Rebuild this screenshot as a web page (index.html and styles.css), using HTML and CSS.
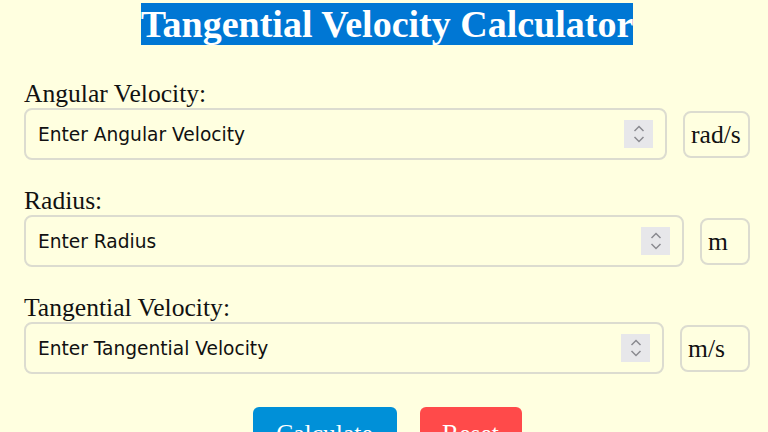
FILE: index.html
```html
<!DOCTYPE html>
<html>
<head>
  <meta charset="utf-8">
  <title>Tangential Velocity Calculator</title>
  <link rel="stylesheet" href="styles.css">
</head>
<body>
  <div class="calculator">
    <h1><span class="title">Tangential Velocity Calculator</span></h1>

    <div class="field">
      <label for="angular">Angular Velocity:</label>
      <div class="field-row">
        <div class="input-wrap">
          <input type="number" id="angular" placeholder="Enter Angular Velocity">
          <span class="spinner">
            <svg width="12" height="20" viewBox="0 0 12 20"><path d="M1.5 7 L6 2.5 L10.5 7 M1.5 13 L6 17.5 L10.5 13" fill="none" stroke="#8a8a90" stroke-width="1.5"/></svg>
          </span>
        </div>
        <select class="unit unit-angular">
          <option>rad/s</option>
        </select>
      </div>
    </div>

    <div class="field">
      <label for="radius">Radius:</label>
      <div class="field-row">
        <div class="input-wrap">
          <input type="number" id="radius" placeholder="Enter Radius">
          <span class="spinner">
            <svg width="12" height="20" viewBox="0 0 12 20"><path d="M1.5 7 L6 2.5 L10.5 7 M1.5 13 L6 17.5 L10.5 13" fill="none" stroke="#8a8a90" stroke-width="1.5"/></svg>
          </span>
        </div>
        <select class="unit unit-radius">
          <option>m</option>
        </select>
      </div>
    </div>

    <div class="field">
      <label for="tangential">Tangential Velocity:</label>
      <div class="field-row">
        <div class="input-wrap">
          <input type="number" id="tangential" placeholder="Enter Tangential Velocity">
          <span class="spinner">
            <svg width="12" height="20" viewBox="0 0 12 20"><path d="M1.5 7 L6 2.5 L10.5 7 M1.5 13 L6 17.5 L10.5 13" fill="none" stroke="#8a8a90" stroke-width="1.5"/></svg>
          </span>
        </div>
        <select class="unit unit-speed">
          <option>m/s</option>
        </select>
      </div>
    </div>

    <div class="buttons">
      <button class="button calc">Calculate</button>
      <button class="button reset">Reset</button>
    </div>
  </div>
</body>
</html>
```

FILE: styles.css
```css
body {
  margin: 0;
  background-color: #ffffe0;
  font-family: "Liberation Serif", "Times New Roman", serif;
  color: #111;
}

.calculator {
  padding: 2px 18px 0 24px;
}

h1 {
  margin: 0 0 34px 0;
  text-align: center;
  font-size: 38px;
  line-height: 44px;
}

.title {
  background-color: #0077d4;
  color: white;
}

.field {
  margin-bottom: 27px;
}

.field label {
  display: block;
  font-size: 25.6px;
  line-height: 28px;
}

.field-row {
  display: flex;
  align-items: center;
  gap: 16px;
}

.input-wrap {
  position: relative;
  flex: 1;
  display: flex;
}

input[type="number"] {
  flex: 1;
  width: 100%;
  height: 52px;
  box-sizing: border-box;
  padding: 0 50px 0 12px;
  border: 2px solid #dcdcd0;
  border-radius: 8px;
  background-color: #ffffe0;
  font-family: "DejaVu Sans", Tahoma, sans-serif;
  font-size: 18.6px;
  color: #111;
  appearance: textfield;
  -moz-appearance: textfield;
}

input[type="number"]::-webkit-inner-spin-button,
input[type="number"]::-webkit-outer-spin-button {
  -webkit-appearance: none;
  margin: 0;
}

input::placeholder {
  color: #111;
}

.spinner {
  position: absolute;
  right: 14px;
  top: 12px;
  width: 29px;
  height: 28px;
  background-color: #e7e7ea;
  display: flex;
  align-items: center;
  justify-content: center;
}

.unit {
  appearance: none;
  -webkit-appearance: none;
  height: 47px;
  box-sizing: border-box;
  padding: 0 6px;
  border: 2px solid #dcdcd0;
  border-radius: 8px;
  background-color: #ffffe0;
  font-family: "Liberation Serif", "Times New Roman", serif;
  font-size: 25.6px;
  color: #111;
}

.unit-angular {
  width: 67px;
}

.unit-radius {
  width: 50px;
}

.unit-speed {
  width: 70px;
}

.buttons {
  display: flex;
  justify-content: center;
  gap: 23px;
  padding-top: 6px;
}

.button {
  border: none;
  border-radius: 6px;
  color: white;
  font-family: "Liberation Serif", "Times New Roman", serif;
  font-size: 25.6px;
  padding: 12px 20px;
  cursor: pointer;
}

.button.calc {
  background-color: #0090d8;
  width: 144px;
}

.button.reset {
  background-color: #ff4a4a;
  width: 102px;
}
```
